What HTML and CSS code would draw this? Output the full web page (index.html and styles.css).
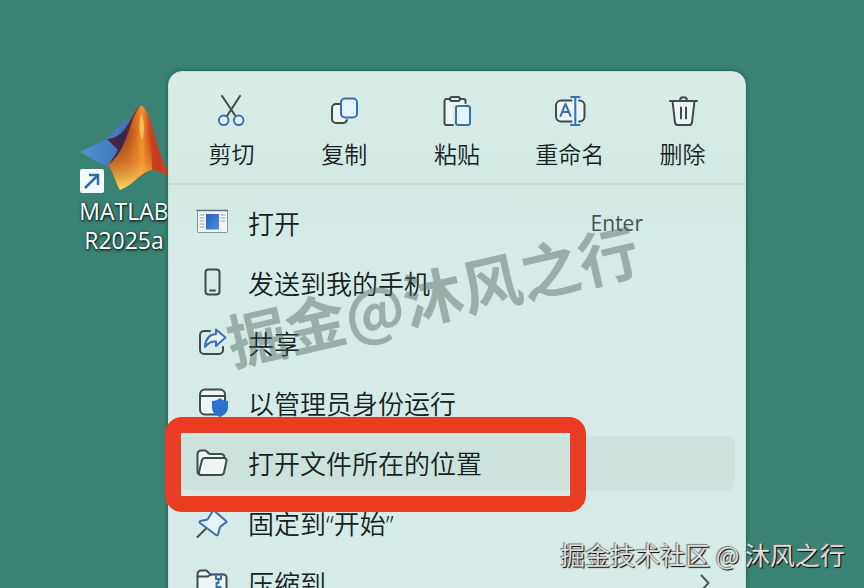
FILE: index.html
```html
<!DOCTYPE html>
<html lang="zh-CN">
<head>
<meta charset="utf-8">
<meta name="viewport" content="width=device-width, initial-scale=1">
<title>MATLAB R2025a</title>
<link rel="stylesheet" href="styles.css">
</head>
<body>
<main class="desktop">
  <a class="shortcut" href="#">
    <span class="shortcut-art">
      <svg class="logo" viewBox="0 0 88 88" aria-hidden="true">
        <defs>
          <linearGradient id="wing" x1="0" y1="0" x2="1" y2="0"><stop offset="0" stop-color="#4f94cf"/><stop offset="1" stop-color="#3f6fb8"/></linearGradient>
          <linearGradient id="flame" x1="0" y1="0" x2="1" y2="0"><stop offset="0" stop-color="#7c2b1d"/><stop offset=".3" stop-color="#a8451b"/><stop offset=".48" stop-color="#d9731f"/><stop offset=".57" stop-color="#f0942f"/><stop offset=".7" stop-color="#c9441f"/><stop offset=".85" stop-color="#c5391f"/><stop offset="1" stop-color="#d8452c"/></linearGradient>
          <linearGradient id="glow" x1="0" y1="1" x2="0" y2="0"><stop offset="0" stop-color="#ffdc62"/><stop offset=".35" stop-color="#f39a35" stop-opacity=".5"/><stop offset=".65" stop-color="#f39a35" stop-opacity="0"/></linearGradient>
          <linearGradient id="dark" x1="0" y1="1" x2="1" y2="0"><stop offset="0" stop-color="#5b2b3a"/><stop offset=".5" stop-color="#3b2547"/><stop offset="1" stop-color="#7e2f22"/></linearGradient>
        </defs>
        <path fill="url(#wing)" d="M0 48 27 35C33 31 36 20 50 15L44 42 28 62 21 60Z"/>
        <path fill="url(#dark)" d="M27 35C37 34 43 29 48 20 54 11 57 2 61 2L50 38 28 62 38 46Z"/>
        <path fill="url(#flame)" d="M28 61C48 48 50 10 61 1.500 72 5 76 49 88 66V73C82 69 78 66 72 66 60 68 54 81 40 86 35 78 33 67 28 61Z"/>
        <path fill="url(#glow)" d="M28 61C48 48 50 10 61 1.500 68 5 72 40 72 66 60 68 54 81 40 86 35 78 33 67 28 61Z"/>
        <path fill="#ffd36a" opacity=".65" d="M61 10C65 18 65 28 62 36 59 30 59 20 61 10Z"/>
      </svg>
      <svg class="shortcut-badge" viewBox="0 0 24 24" aria-hidden="true">
        <rect width="24" height="24" rx="2" fill="#f3f8fb"/>
        <path d="M5 19 18 6M9 6h9v10" fill="none" stroke="#2d6fa8" stroke-width="2.500"/>
      </svg>
    </span>
    <span class="shortcut-name">MATLAB<br>R2025a</span>
  </a>

  <section class="menu" aria-label="MATLAB R2025a">
    <div class="toolbar">
      <button class="tool" type="button">
        <svg class="icon" viewBox="0 0 32 32"><path d="M7 1 20.500 21M25 1 12 21"/><g class="blue tint"><circle cx="8.700" cy="25.300" r="4.800"/><circle cx="23.700" cy="25.300" r="4.800"/></g></svg>
        <span>剪切</span>
      </button>
      <button class="tool" type="button">
        <svg class="icon" viewBox="0 0 32 32"><path class="pale" d="M12 9H8a4 4 0 0 0-4 4v11a4 4 0 0 0 4 4h7a4 4 0 0 0 4-3"/><rect class="blue tint" x="13" y="3.500" width="16" height="19" rx="4"/></svg>
        <span>复制</span>
      </button>
      <button class="tool" type="button">
        <svg class="icon" viewBox="0 0 32 32"><path class="fill" d="M9 4H5.500a2 2 0 0 0-2 2v22a2 2 0 0 0 2 2H12V10h12V6a2 2 0 0 0-2-2h-3"/><path d="M9 4H5.500a2 2 0 0 0-2 2v22a2 2 0 0 0 2 2H12M19 4h3.500a2 2 0 0 1 2 2v2"/><rect x="9" y="2" width="10" height="4" rx="2"/><rect class="blue tint" x="15" y="11" width="14" height="19" rx="2"/></svg>
        <span>粘贴</span>
      </button>
      <button class="tool" type="button">
        <svg class="icon" viewBox="0 0 32 32"><rect class="pale" x="2" y="5.500" width="28.500" height="21" rx="5"/><path class="gap" d="M21.300 4v24"/><path class="blue" d="M21.300 2v28M17 2h8.500M17 30h8.500M6.500 21l5-12 5 12M8 17h7"/></svg>
        <span>重命名</span>
      </button>
      <button class="tool" type="button">
        <svg class="icon" viewBox="0 0 32 32"><path class="pale" d="M5.500 6 8 27.500a3 3 0 0 0 3 2.500h11a3 3 0 0 0 3-2.500L27.500 6"/><path d="M3 6h27M13 5.500c0-4.500 7-4.500 7 0M14 12.500v11M19 12.500v11"/></svg>
        <span>删除</span>
      </button>
    </div>

    <div class="items">
      <button class="item" type="button">
        <svg class="icon" viewBox="0 0 32 32"><defs><linearGradient id="pane" x1="0" y1="0" x2="1" y2="1"><stop offset="0" stop-color="#2461b8"/><stop offset="1" stop-color="#4b8ee2"/></linearGradient></defs><rect x="1.500" y="3.500" width="30" height="22" rx="1" fill="#f0f5f5" stroke="#899598" stroke-width="1"/><path d="M1 3.500h31" stroke="#647174" stroke-width="1.500"/><rect x="10" y="7" width="13" height="15.500" fill="url(#pane)" stroke="none"/><path d="M4 8h4M4 11h4M4 14h4M4 17h4M4 20h4M25 8h4M25 11h4M25 14h4" stroke="#9aa5a8" stroke-width="1"/></svg>
        <span>打开</span><span class="key">Enter</span>
      </button>
      <button class="item" type="button">
        <svg class="icon" viewBox="0 0 32 32"><rect x="9.500" y="2.500" width="14" height="25" rx="3"/><path d="M14 23.500h5"/></svg>
        <span>发送到我的手机</span>
      </button>
      <button class="item" type="button">
        <svg class="icon" viewBox="0 0 32 32"><path d="M14 4H8a4 4 0 0 0-4 4v15a4 4 0 0 0 4 4h15a4 4 0 0 0 4-4v-3"/><path class="blue tint" d="M20 2.500 29.500 10.500 20 19V14.500C15 14 12 16 9 20 9.500 12 13 7.500 20 7Z"/></svg>
        <span>共享</span>
      </button>
      <button class="item" type="button">
        <svg class="icon" viewBox="0 0 32 32"><rect class="pale" x="4" y="2.500" width="25" height="25" rx="5"/><path d="M4 9h25"/><path d="M24 11c2 2 5 3 8 3v6c0 5-3 8-8 10-5-2-8-5-8-10v-6c3 0 6-1 8-3Z" fill="#2a72cf" stroke="none"/></svg>
        <span>以管理员身份运行</span>
      </button>
      <div class="item-wrap">
        <button class="item item-active" type="button">
          <svg class="icon" viewBox="0 0 32 32"><path class="pale" d="M5 28a4 4 0 0 1-3.500-4V7A3.500 3.500 0 0 1 5 3.500h4c2 0 3 3.500 5 3.500h11a3.500 3.500 0 0 1 3.500 3.500V11"/><path class="pale" d="M8.500 11H28a2.500 2.500 0 0 1 2.500 3L28 25.500a3.500 3.500 0 0 1-3.500 2.500H5.500a2.500 2.500 0 0 1-2.500-3L6 13a3 3 0 0 1 2.500-2Z"/></svg>
          <span>打开文件所在的位置</span>
        </button>
        <span class="marker"></span>
      </div>
      <button class="item" type="button">
        <svg class="icon" viewBox="0 0 32 32"><path d="M10.500 21 1.500 30"/><path class="blue tint" d="M18.500 4 30 14c1 1 .5 2-1 2l-5 4-2 7.500c-.5 1-1.500 1-2 .5L4 16c-1-1-.5-1.500.5-2l7-1.500 5-8c.5-1 1-1 2-.5Z"/></svg>
        <span>固定到“开始”</span>
      </button>
      <button class="item" type="button">
        <svg class="icon" viewBox="0 0 32 32"><path class="pale" d="M1.500 8V7A3.500 3.500 0 0 1 5 3.500h5c2 0 3 4 5 4h12.500A3 3 0 0 1 30.500 11v14a3 3 0 0 1-3 3h-23a3 3 0 0 1-3-3Z"/><path d="M1.500 9.500H11c2 0 2.500-2 4-2"/><path class="blue" d="M20 7v5h5V7M22.500 12v4h-2v4h4v4h-4v4"/></svg>
        <span>压缩到</span>
        <svg class="chevron" viewBox="0 0 12 20" aria-hidden="true"><path d="m2 2 7.500 8L2 18"/></svg>
      </button>
    </div>
  </section>

  <p class="stamp">掘金@沐风之行</p>
  <p class="credit">掘金技术社区 @ 沐风之行</p>
</main>
</body>
</html>
```
FILE: styles.css
```css
* {
  box-sizing: border-box;
}

body {
  margin: 0;
  font-family: "Open Sans", "Noto Sans CJK SC", sans-serif;
  color: #17211f;
}

button {
  border: 0;
  background: none;
  font: inherit;
  color: inherit;
}

p {
  margin: 0;
}

.desktop {
  position: relative;
  display: grid;
  grid-template-columns: 168px minmax(0, 1fr) 118px;
  height: 100vh;
  overflow: hidden;
  background: #3a8273;
}

.shortcut {
  display: flex;
  flex-direction: column;
  align-items: center;
  width: 88px;
  margin: 104px 0 0 80px;
  color: #fff;
  text-decoration: none;
}

.shortcut-art {
  position: relative;
  width: 88px;
  height: 93px;
}

.logo {
  display: block;
  width: 88px;
  height: 88px;
}

.shortcut-badge {
  position: absolute;
  left: 0;
  bottom: 4px;
  width: 24px;
  height: 24px;
}

.shortcut-name {
  font-size: 23px;
  line-height: 29px;
  text-align: center;
  text-shadow: 1px 1px 2px #102b25, 0 1px 3px #102b25;
}

.menu {
  position: relative;
  margin-top: 71px;
  height: max-content;
  min-height: 100%;
  border: 1px solid #c5e3dc;
  border-radius: 14px 14px 0 0;
  background: linear-gradient(#d8ede8 0, #d2e8e3 112px, #d6ebe7 190px);
  box-shadow: 0 0 4px #1f5a4d;
}

.toolbar {
  display: grid;
  grid-template-columns: repeat(5, 1fr);
  padding: 23px 6px 13px;
  border-bottom: 2px solid #c6dbd6;
}

.tool {
  display: flex;
  flex-direction: column;
  align-items: center;
  gap: 11px;
  padding: 0;
  font-size: 23px;
  font-weight: 350;
  line-height: 32px;
}

.icon {
  flex: none;
  width: 32px;
  height: 32px;
  fill: none;
  stroke: #414b4b;
  stroke-width: 2;
  stroke-linecap: round;
  stroke-linejoin: round;
}

.blue {
  stroke: #3b6fae;
}

.tint {
  fill: #e4f3fc;
}

.pale {
  fill: #edf5f5;
}

.fill {
  fill: #edf5f5;
  stroke: none;
}

.gap {
  stroke: #e4f3fc;
  stroke-width: 6;
}

.items {
  display: flex;
  flex-direction: column;
  gap: 6px;
  padding: 11px 10px;
}

.item {
  display: flex;
  align-items: center;
  gap: 20px;
  width: 100%;
  height: 54px;
  padding: 0 24px 0 17px;
  border-radius: 8px;
  font-size: 26px;
  font-weight: 350;
  text-align: left;
  white-space: nowrap;
}

.item-wrap {
  position: relative;
}

.item-active {
  background: #cde1dd;
}

.key {
  margin: 0 68px 0 auto;
  font-size: 21px;
  font-weight: 400;
  color: #46534f;
}

.chevron {
  width: 12px;
  height: 20px;
  margin-left: auto;
  fill: none;
  stroke: #4c5855;
  stroke-width: 2;
}

.marker {
  position: absolute;
  top: -19px;
  left: -14px;
  width: 421px;
  height: 95px;
  border: 16px solid #e93c22;
  border-radius: 17px;
  pointer-events: none;
}

.stamp {
  position: absolute;
  top: 50%;
  left: 50%;
  transform: translate(-50%, -50%) rotate(-13deg);
  font-family: "Noto Sans CJK SC", sans-serif;
  font-size: 60px;
  font-weight: 700;
  line-height: 80px;
  white-space: nowrap;
  color: rgba(80, 100, 94, 0.45);
  pointer-events: none;
}

.credit {
  position: absolute;
  right: 19px;
  bottom: 16px;
  font-family: "Noto Sans CJK SC", sans-serif;
  font-size: 25px;
  line-height: 36px;
  white-space: nowrap;
  color: #dcdfde;
  text-shadow: 1px 1px 1px #000, -1px -1px 1px #777;
}
```
